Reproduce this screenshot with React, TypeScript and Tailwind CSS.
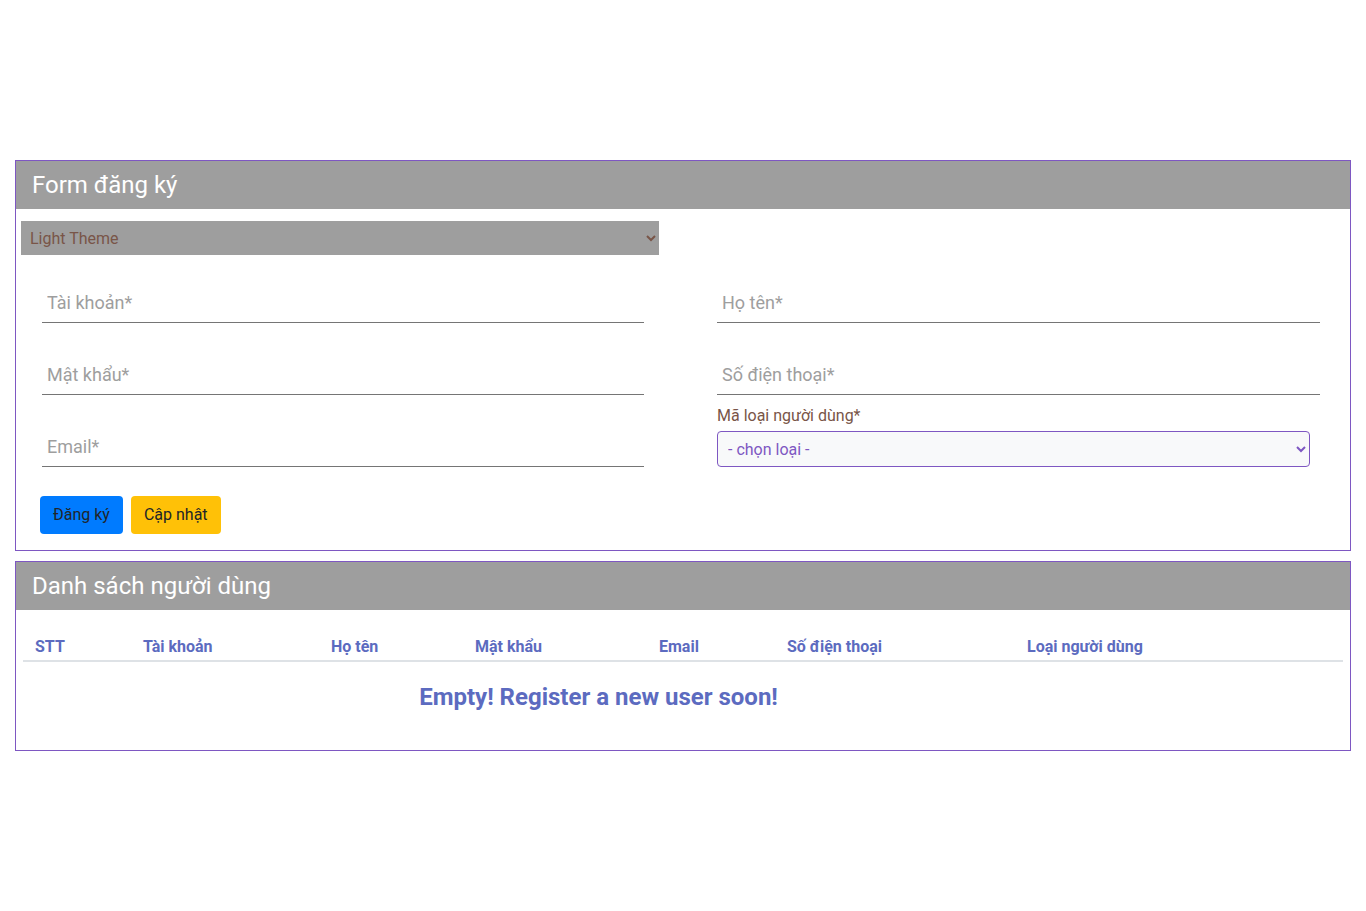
import React from "react";

const font = { fontFamily: "Roboto, 'Noto Sans', sans-serif" };

function UnderlineInput({ placeholder }: { placeholder: string }) {
  return (
    <input
      type="text"
      placeholder={placeholder}
      className="block h-[38px] w-full border-0 border-b border-solid border-b-[#757575] px-[5px] pb-[2px] text-[18px] text-[#616161] outline-none placeholder:text-[#9e9e9e]"
    />
  );
}

function CardHeader({ title }: { title: string }) {
  return (
    <div className="flex h-[48px] items-center bg-[#9e9e9e] px-4 text-[24px] text-white">
      {title}
    </div>
  );
}

const columns = [
  { label: "STT", w: "w-[108px]" },
  { label: "Tài khoản", w: "w-[188px]" },
  { label: "Họ tên", w: "w-[144px]" },
  { label: "Mật khẩu", w: "w-[184px]" },
  { label: "Email", w: "w-[128px]" },
  { label: "Số điện thoại", w: "w-[240px]" },
  { label: "Loại người dùng", w: "" },
];

export default function App() {
  return (
    <div style={font} className="min-h-[911px] bg-white px-[15px] pt-[160px]">
      {/* form card */}
      <div className="border border-[#7e57c2]">
        <CardHeader title="Form đăng ký" />
        <div className="pb-4 pt-3">
          <select className="ml-[5px] block h-[34px] w-[638px] bg-[#9e9e9e] pl-[5px] text-[16px] text-[#795548] outline-none">
            <option>Light Theme</option>
            <option>Dark Theme</option>
          </select>

          <div className="mt-[30px] flex gap-[73px] pl-[26px] pr-[30px]">
            <div className="flex w-[602px] flex-col gap-[34px]">
              <UnderlineInput placeholder="Tài khoản*" />
              <UnderlineInput placeholder="Mật khẩu*" />
              <UnderlineInput placeholder="Email*" />
            </div>
            <div className="flex flex-1 flex-col">
              <UnderlineInput placeholder="Họ tên*" />
              <div className="mt-[34px]">
                <UnderlineInput placeholder="Số điện thoại*" />
              </div>
              <label className="mt-[9px] text-[16px] leading-6 text-[#795548]">Mã loại người dùng*</label>
              <select className="mt-[3px] block h-[36px] w-[593px] rounded border border-[#7e57c2] bg-[#f8f9fa] pl-[6px] text-[16px] text-[#7e57c2] outline-none">
                <option>- chọn loại -</option>
                <option>Khách hàng</option>
                <option>Quản trị</option>
              </select>
            </div>
          </div>

          <div className="ml-[24px] mt-[29px] flex gap-[8px]">
            <button className="h-[38px] rounded bg-[#007bff] px-[13px] text-[16px] text-[#212529]">Đăng ký</button>
            <button className="h-[38px] rounded bg-[#ffc107] px-[13px] text-[16px] text-[#212529]">Cập nhật</button>
          </div>
        </div>
      </div>

      {/* list card */}
      <div className="mt-[10px] border border-[#7e57c2]">
        <CardHeader title="Danh sách người dùng" />
        <div className="px-[7px] pb-[17px] pt-3">
          <table className="w-full border-collapse text-left text-[#5c6bc0]">
            <thead>
              <tr className="border-b-2 border-[#dee2e6]">
                {columns.map((c) => (
                  <th key={c.label} className={`${c.w} px-3 pb-[1px] pt-[13px] text-[16px] font-bold leading-6`}>
                    {c.label}
                  </th>
                ))}
              </tr>
            </thead>
            <tbody>
              <tr>
                <td colSpan={7} className="pb-[20px] pt-[19px]">
                  <div className="w-[1151px] text-center text-[24px] font-bold leading-8">
                    Empty! Register a new user soon!
                  </div>
                </td>
              </tr>
            </tbody>
          </table>
        </div>
      </div>
    </div>
  );
}
